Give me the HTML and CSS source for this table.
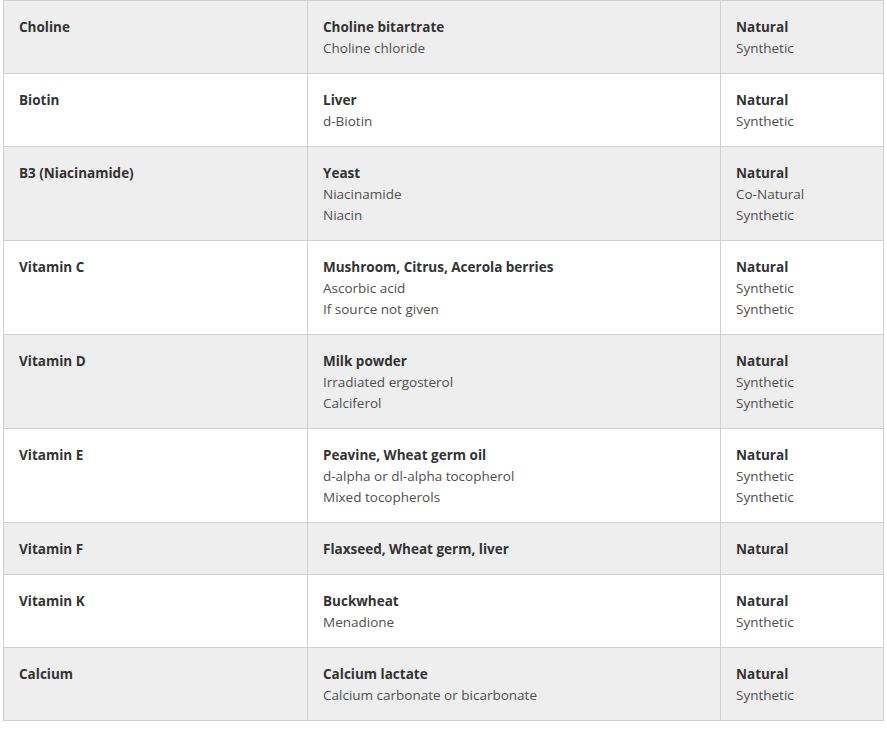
FILE: index.html
```html
<!DOCTYPE html>
<html lang="en">
<head>
<meta charset="utf-8">
<title>Vitamin sources</title>
<link rel="stylesheet" href="styles.css">
</head>
<body>
<table class="vt">
  <colgroup>
    <col class="c1"><col class="c2"><col class="c3">
  </colgroup>
  <tbody>
    <tr class="alt">
      <td><b>Choline</b></td>
      <td><b>Choline bitartrate</b><span>Choline chloride</span></td>
      <td><b>Natural</b><span>Synthetic</span></td>
    </tr>
    <tr>
      <td><b>Biotin</b></td>
      <td><b>Liver</b><span>d-Biotin</span></td>
      <td><b>Natural</b><span>Synthetic</span></td>
    </tr>
    <tr class="alt">
      <td><b>B3 (Niacinamide)</b></td>
      <td><b>Yeast</b><span>Niacinamide</span><span>Niacin</span></td>
      <td><b>Natural</b><span>Co-Natural</span><span>Synthetic</span></td>
    </tr>
    <tr>
      <td><b>Vitamin C</b></td>
      <td><b>Mushroom, Citrus, Acerola berries</b><span>Ascorbic acid</span><span>If source not given</span></td>
      <td><b>Natural</b><span>Synthetic</span><span>Synthetic</span></td>
    </tr>
    <tr class="alt">
      <td><b>Vitamin D</b></td>
      <td><b>Milk powder</b><span>Irradiated ergosterol</span><span>Calciferol</span></td>
      <td><b>Natural</b><span>Synthetic</span><span>Synthetic</span></td>
    </tr>
    <tr>
      <td><b>Vitamin E</b></td>
      <td><b>Peavine, Wheat germ oil</b><span>d-alpha or dl-alpha tocopherol</span><span>Mixed tocopherols</span></td>
      <td><b>Natural</b><span>Synthetic</span><span>Synthetic</span></td>
    </tr>
    <tr class="alt">
      <td><b>Vitamin F</b></td>
      <td><b>Flaxseed, Wheat germ, liver</b></td>
      <td><b>Natural</b></td>
    </tr>
    <tr>
      <td><b>Vitamin K</b></td>
      <td><b>Buckwheat</b><span>Menadione</span></td>
      <td><b>Natural</b><span>Synthetic</span></td>
    </tr>
    <tr class="alt">
      <td><b>Calcium</b></td>
      <td><b>Calcium lactate</b><span>Calcium carbonate or bicarbonate</span></td>
      <td><b>Natural</b><span>Synthetic</span></td>
    </tr>
  </tbody>
</table>
</body>
</html>
```

FILE: styles.css
```css
html, body {
  margin: 0;
  padding: 0;
  background: #ffffff;
}

body {
  font-family: "Open Sans", "Noto Sans", "Liberation Sans", sans-serif;
  font-size: 13.5px;
  line-height: 21px;
  color: #505050;
}

.vt {
  margin: 0 0 0 3px;
  width: 880px;
  border-collapse: collapse;
  table-layout: fixed;
  border: 1px solid #d0d0d0;
}

.vt .c1 { width: 304px; }
.vt .c2 { width: 413px; }
.vt .c3 { width: 163px; }

.vt td {
  vertical-align: top;
  padding: 16px 15px 14px;
  border: 1px solid #d0d0d0;
  text-align: left;
}

.vt tr.alt td {
  background: #eeeeee;
}

.vt b,
.vt span {
  display: block;
}

.vt b {
  font-weight: 700;
  color: #333333;
}
```
